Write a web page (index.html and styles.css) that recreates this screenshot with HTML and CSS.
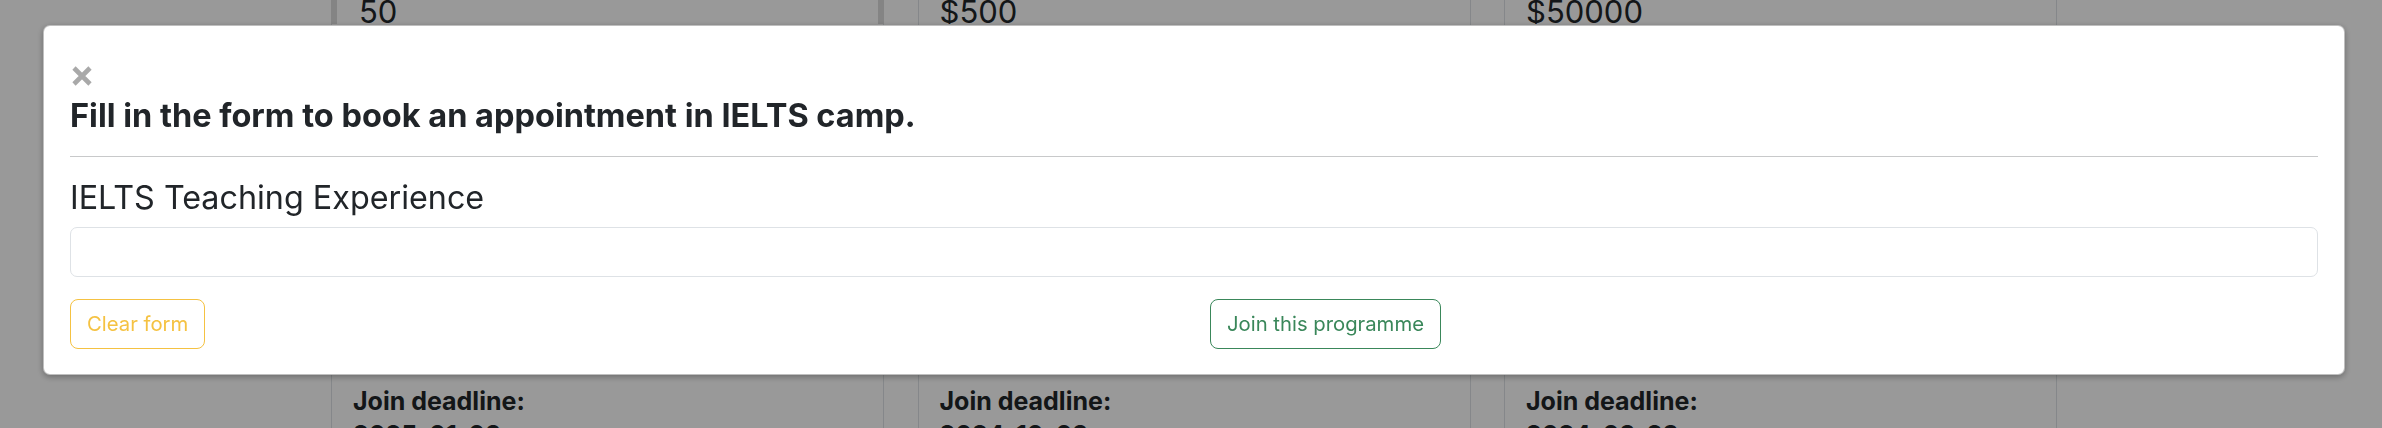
FILE: index.html
```html
<!DOCTYPE html>
<html lang="en">
<head>
<meta charset="utf-8">
<title>Book an appointment</title>
<link rel="stylesheet" href="styles.css">
</head>
<body>
<div class="page">
  <div class="cards">
    <div class="card">
      <div class="amount amount-focus">50</div>
      <div class="card-hidden"></div>
      <div class="deadline-label">Join deadline:</div>
      <div class="deadline-date">2025-01-09</div>
    </div>
    <div class="card">
      <div class="amount">$500</div>
      <div class="card-hidden"></div>
      <div class="deadline-label">Join deadline:</div>
      <div class="deadline-date">2024-10-09</div>
    </div>
    <div class="card">
      <div class="amount">$50000</div>
      <div class="card-hidden"></div>
      <div class="deadline-label">Join deadline:</div>
      <div class="deadline-date">2024-09-23</div>
    </div>
  </div>
</div>
<div class="backdrop"></div>
<div class="modal">
  <button class="close" type="button" aria-label="Close">
    <svg width="20" height="20" viewBox="0 0 20 20"><path d="M2 2 L18 18 M18 2 L2 18" stroke="#a9a9a9" stroke-width="4.6" fill="none"/></svg>
  </button>
  <h5 class="title">Fill in the form to book an appointment in IELTS camp.</h5>
  <hr class="divider">
  <label class="field-label" for="exp">IELTS Teaching Experience</label>
  <input class="field-input" id="exp" type="text">
  <div class="actions">
    <div class="action-cell"><button class="btn btn-warning" type="button">Clear form</button></div>
    <div class="action-cell join-cell"><button class="btn btn-success" type="button">Join this programme</button></div>
  </div>
</div>
</body>
</html>
```

FILE: styles.css
```css
html, body {
  margin: 0;
  padding: 0;
  height: 428px;
  overflow: hidden;
  background: #ffffff;
  font-family: Inter, "Noto Sans", sans-serif;
  color: #212529;
}

.page {
  width: 100%;
  height: 428px;
  overflow: hidden;
}

.cards {
  display: flex;
  gap: 33.5px;
  margin-left: 331px;
}

.card {
  width: 553px;
  flex: 0 0 553px;
  box-sizing: border-box;
  border-left: 1px solid #dee2e6;
  border-right: 1px solid #dee2e6;
  padding: 0 20px 0 21px;
  display: flex;
  flex-direction: column;
}

.amount {
  font-size: 31px;
  line-height: 24px;
  height: 24px;
  overflow: hidden;
}

.amount-focus {
  margin: 0 -21px 0 -22px;
  padding-left: 22px;
  border-left: 6px solid #dcdcdc;
  border-right: 6px solid #dcdcdc;
}

.card-hidden {
  height: 361.5px;
}

.deadline-label {
  font-size: 25px;
  font-weight: 700;
  line-height: 30px;
}

.deadline-date {
  font-size: 25px;
  font-weight: 700;
  line-height: 30px;
  margin-top: 4px;
}

.backdrop {
  position: fixed;
  inset: 0;
  background: rgba(0, 0, 0, 0.4);
}

.modal {
  position: fixed;
  top: 25px;
  left: 43px;
  width: 2302px;
  box-sizing: border-box;
  background: #ffffff;
  border: 1px solid rgba(0, 0, 0, 0.25);
  border-radius: 7px;
  box-shadow: 0 2px 6px rgba(0, 0, 0, 0.3);
  padding: 40px 26px 25px;
}

.close {
  display: block;
  margin: 0 0 0 2px;
  padding: 0;
  border: 0;
  background: none;
  width: 20px;
  height: 20px;
  line-height: 0;
}

.close svg {
  display: block;
}

.title {
  margin: 12px 0 0;
  font-size: 32.5px;
  line-height: 36px;
  font-weight: 700;
  color: #212529;
}

.divider {
  margin: 22px 0 0;
  border: 0;
  border-top: 1px solid #c8c9ca;
  height: 0;
}

.field-label {
  display: block;
  margin-top: 23px;
  font-size: 32.3px;
  line-height: 36px;
  font-weight: 400;
  color: #212529;
}

.field-input {
  display: block;
  box-sizing: border-box;
  width: 100%;
  height: 50px;
  margin-top: 11px;
  border: 1px solid #dee2e6;
  border-radius: 7px;
  background: #fff;
  font-family: inherit;
  font-size: 22px;
  padding: 0 16px;
}

.actions {
  display: grid;
  grid-template-columns: 1fr 1fr;
  margin-top: 22px;
}

.join-cell {
  padding-left: 16px;
}

.btn {
  box-sizing: border-box;
  height: 50px;
  padding: 0 16px;
  border-radius: 8px;
  background: #fff;
  font-family: inherit;
  font-size: 20.3px;
  line-height: 1;
  cursor: pointer;
}

.btn-warning {
  color: #f5c242;
  border: 1px solid #f5c242;
}

.btn-success {
  color: #3a875a;
  border: 1px solid #3a875a;
}
```
